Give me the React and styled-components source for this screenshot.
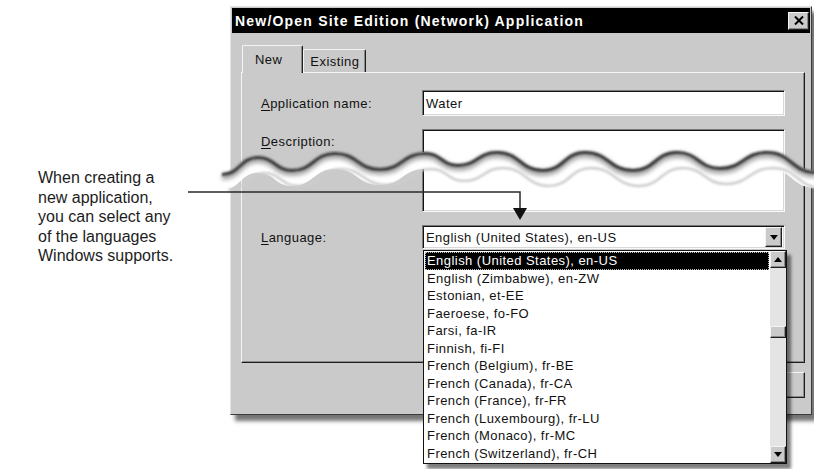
import React from "react";
import styled, { createGlobalStyle } from "styled-components";

const GlobalStyle = createGlobalStyle`
  html, body { margin: 0; padding: 0; background: #fff; }
  body { font-family: "Liberation Sans", Arial, sans-serif; }
`;

const GRAY = "#cacaca";
const DARK = "#3a3a3a";

const Page = styled.div`
  position: relative;
  width: 814px;
  height: 469px;
  overflow: hidden;
  display: flex;
  align-items: flex-start;
  background: #fff;
`;

const Callout = styled.p`
  flex: none;
  width: 192px;
  margin: 0;
  padding: 168px 0 0 38px;
  font-size: 16px;
  line-height: 19.5px;
  color: #1c1c1c;
`;

const Window = styled.div`
  position: relative;
  flex: none;
  margin-top: 6px;
  width: 582px;
  height: 409px;
  box-sizing: border-box;
  padding: 1px;
  background: ${GRAY};
  border: 1px solid;
  border-color: #e4e4e4 ${DARK} ${DARK} #e4e4e4;
  box-shadow: 5px 6px 4px rgba(0, 0, 0, 0.55);
  display: flex;
  flex-direction: column;
  letter-spacing: 0.45px;
`;

const TitleBar = styled.div`
  height: 25px;
  background: #000;
  display: flex;
  align-items: center;
  justify-content: space-between;
  padding: 0 1px 0 3px;
`;

const Title = styled.span`
  color: #fff;
  font-weight: bold;
  font-size: 14px;
  letter-spacing: 1.2px;
`;

const Raised = styled.div`
  box-sizing: border-box;
  background: ${GRAY};
  border: 1px solid;
  border-color: #f4f4f4 #1e1e1e #1e1e1e #f4f4f4;
  box-shadow: inset -1px -1px 0 #8a8a8a;
  display: flex;
  align-items: center;
  justify-content: center;
`;

const CloseButton = styled(Raised)`
  width: 21px;
  height: 18px;
`;

const Body = styled.div`
  flex: 1;
  padding: 12px 5px 0 9px;
  display: flex;
  flex-direction: column;
`;

const Tabs = styled.div`
  display: flex;
  align-items: flex-end;
  height: 27px;
  padding-left: 1px;
`;

const Tab = styled.div`
  position: relative;
  z-index: ${(p) => (p.$active ? 2 : 1)};
  height: ${(p) => (p.$active ? 28 : 23)}px;
  margin-bottom: ${(p) => (p.$active ? -1 : 0)}px;
  padding: ${(p) => (p.$active ? "0 20px 0 12px" : "0 6px")};
  box-sizing: border-box;
  background: ${GRAY};
  border: 1px solid;
  border-bottom: none;
  border-color: #f4f4f4 #1e1e1e #f4f4f4 #f4f4f4;
  border-radius: 2px 2px 0 0;
  box-shadow: inset -1px 0 0 #8a8a8a;
  font-size: 13px;
  color: #111;
  display: flex;
  align-items: center;
`;

const Panel = styled.div`
  width: 564px;
  height: 291px;
  box-sizing: border-box;
  border: 1px solid;
  border-color: #f4f4f4 #1e1e1e #1e1e1e #f4f4f4;
  box-shadow: inset -1px -1px 0 #8a8a8a;
  padding: 17px 19px 0 19px;
  display: grid;
  grid-template-columns: 161px 363px;
  grid-template-rows: 26px 83px 24px;
  row-gap: 13px;
`;

const Label = styled.label`
  font-size: 13px;
  color: #111;
  align-self: ${(p) => (p.$top ? "start" : "center")};
  padding-top: ${(p) => (p.$top ? 5 : 0)}px;
  u { text-decoration-thickness: 1px; text-underline-offset: 2px; }
`;

const Field = styled.div`
  position: relative;
  box-sizing: border-box;
  background: #fff;
  border: 1px solid;
  border-color: #7a7a7a #fafafa #fafafa #7a7a7a;
  box-shadow: inset 1px 1px 0 #141414, inset -1px -1px 0 #d8d8d8;
  font-size: 13px;
  color: #111;
  padding-left: 3px;
  display: flex;
  align-items: ${(p) => (p.$top ? "flex-start" : "center")};
`;

const ComboText = styled.span`
  flex: 1;
`;

const DropButton = styled(Raised)`
  width: 17px;
  height: 20px;
  margin-right: 2px;
`;

const List = styled.div`
  position: absolute;
  z-index: 5;
  top: calc(100% + 2px);
  left: 0;
  width: 364px;
  height: 214px;
  box-sizing: border-box;
  background: #fff;
  border: 1px solid #111;
  box-shadow: 4px 5px 3px rgba(0, 0, 0, 0.5);
  display: flex;
`;

const Items = styled.div`
  flex: 1;
  padding: 1px;
  overflow: hidden;
`;

const Item = styled.div`
  height: 17.5px;
  line-height: 17.5px;
  padding-left: 2px;
  font-size: 13px;
  white-space: nowrap;
  color: ${(p) => (p.$selected ? "#fff" : "#111")};
  background: ${(p) => (p.$selected ? "#000" : "transparent")};
  outline: ${(p) => (p.$selected ? "1px dotted #bdbdbd" : "none")};
  outline-offset: -1px;
`;

const ScrollBar = styled.div`
  width: 16px;
  display: flex;
  flex-direction: column;
  background: #e4e4e4;
`;

const ScrollButton = styled(Raised)`
  width: 16px;
  height: 17px;
`;

const Track = styled.div`
  flex: 1;
`;

const Thumb = styled(Raised)`
  margin-top: 58px;
  width: 16px;
  height: 12px;
`;

const Footer = styled.div`
  display: flex;
  justify-content: flex-end;
  padding-top: 9px;
`;

const Button = styled(Raised)`
  width: 100px;
  height: 26px;
`;

const Overlay = styled.svg`
  position: absolute;
  left: 0;
  top: 0;
  z-index: ${(p) => p.$z};
  pointer-events: none;
`;

const Arrow = ({ up }) => (
  <svg width="8" height="5" viewBox="0 0 8 5">
    <path d={up ? "M0 5 L4 0 L8 5 Z" : "M0 0 L8 0 L4 5 Z"} fill="#000" />
  </svg>
);

const languages = [
  "English (United States), en-US",
  "English (Zimbabwe), en-ZW",
  "Estonian, et-EE",
  "Faeroese, fo-FO",
  "Farsi, fa-IR",
  "Finnish, fi-FI",
  "French (Belgium), fr-BE",
  "French (Canada), fr-CA",
  "French (France), fr-FR",
  "French (Luxembourg), fr-LU",
  "French (Monaco), fr-MC",
  "French (Switzerland), fr-CH",
];

// torn-edge wave: alternating peaks and troughs
const wavePts = [
  [222, 174], [258, 157], [292, 170], [335, 153], [380, 169], [425, 153],
  [458, 165], [497, 152], [543, 170], [585, 152], [633, 170], [677, 152],
  [720, 168], [767, 152], [816, 172],
];

const segs = (pts, dy, dx) =>
  pts
    .map(([x, y], i) => {
      if (i === 0) return null;
      const [px, py] = pts[i - 1];
      const h = (x - px) / 2;
      return `C${px + h + dx} ${py + dy} ${x - h + dx} ${y + dy} ${x + dx} ${y + dy}`;
    })
    .filter(Boolean)
    .join(" ");

const curve = (dy, dx = 0) =>
  `M${wavePts[0][0] + dx} ${wavePts[0][1] + dy} ${segs(wavePts, dy, dx)}`;

const bandPath = () => {
  const rev = [...wavePts].reverse();
  return `${curve(-1)} L${rev[0][0]} ${rev[0][1] + 16} ${segs(rev, 16, 0)} Z`;
};

export default function App() {
  return (
    <Page>
      <GlobalStyle />
      <Callout>
        When creating a<br />
        new application,<br />
        you can select any<br />
        of the languages<br />
        Windows supports.
      </Callout>

      <Window>
        <TitleBar>
          <Title>New/Open Site Edition (Network) Application</Title>
          <CloseButton>
            <svg width="10" height="9" viewBox="0 0 10 9">
              <path d="M1 0.5 L9 8.5 M9 0.5 L1 8.5" stroke="#000" strokeWidth="2" />
            </svg>
          </CloseButton>
        </TitleBar>

        <Body>
          <Tabs>
            <Tab $active>New</Tab>
            <Tab>Existing</Tab>
          </Tabs>
          <Panel>
            <Label>
              <u>A</u>pplication name:
            </Label>
            <Field>Water</Field>

            <Label $top>
              <u>D</u>escription:
            </Label>
            <Field $top />

            <Label>
              <u>L</u>anguage:
            </Label>
            <Field>
              <ComboText>English (United States), en-US</ComboText>
              <DropButton>
                <Arrow />
              </DropButton>
              <List>
                <Items>
                  {languages.map((l, i) => (
                    <Item key={l} $selected={i === 0}>
                      {l}
                    </Item>
                  ))}
                </Items>
                <ScrollBar>
                  <ScrollButton>
                    <Arrow up />
                  </ScrollButton>
                  <Track>
                    <Thumb />
                  </Track>
                  <ScrollButton>
                    <Arrow />
                  </ScrollButton>
                </ScrollBar>
              </List>
            </Field>
          </Panel>
          <Footer>
            <Button />
          </Footer>
        </Body>
      </Window>

      <Overlay $z={3} width="814" height="469">
        <defs>
          <filter id="soft" x="-5%" y="-50%" width="110%" height="200%">
            <feGaussianBlur stdDeviation="1.2" />
          </filter>
          <filter id="softer" x="-5%" y="-50%" width="110%" height="200%">
            <feGaussianBlur stdDeviation="2" />
          </filter>
        </defs>
        <path d={bandPath()} fill="#fff" />
        <path d={curve(3)} fill="none" stroke="#a8a8a8" strokeWidth="6" filter="url(#softer)" />
        <path d={curve(0.5)} fill="none" stroke="#333" strokeWidth="3" filter="url(#soft)" />
        <path d={curve(16, 6)} fill="none" stroke="#cdcdcd" strokeWidth="2.5" filter="url(#soft)" />
      </Overlay>

      <Overlay $z={4} width="814" height="469">
        <path d="M188 192 H520 V210" fill="none" stroke="#2a2a2a" strokeWidth="1.5" />
        <path d="M513 208 H527 L520 220 Z" fill="#111" />
      </Overlay>
    </Page>
  );
}
